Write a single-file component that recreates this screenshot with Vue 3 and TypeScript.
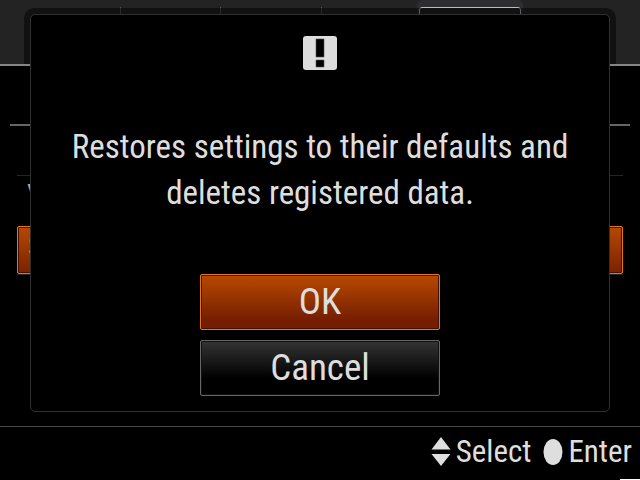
<script setup lang="ts">
import { ref } from 'vue'

type Choice = 'OK' | 'Cancel'

const choices: Choice[] = ['OK', 'Cancel']
const selected = ref<Choice>('OK')
const tabs = [1, 2, 3, 4, 5, 6]
const activeTab = 5
</script>

<template>
  <div class="screen">
    <header class="tabs">
      <span v-for="tab in tabs" :key="tab" class="tab" :class="{ active: tab === activeTab }"></span>
    </header>

    <main class="menu">
      <div class="heading"></div>
      <ul class="list">
        <li class="row">V</li>
        <li class="row current">S</li>
      </ul>
    </main>

    <footer class="guide">
      <span class="hint">
        <svg class="arrows" viewBox="0 0 20 30" aria-hidden="true">
          <path d="M10 0 L19.5 12.5 H0.5 Z M0.5 17 H19.5 L10 29 Z" fill="#dedede" />
        </svg>
        Select
      </span>
      <span class="hint">
        <svg class="dot" viewBox="0 0 20 26" aria-hidden="true">
          <ellipse cx="10" cy="13" rx="9.5" ry="13" fill="#dedede" />
        </svg>
        Enter
      </span>
      <span class="marker"></span>
    </footer>

    <section class="dialog" role="alertdialog" aria-labelledby="message">
      <svg class="alert" viewBox="0 0 34 34" aria-hidden="true">
        <rect width="34" height="34" rx="3" fill="#dedede" />
        <path d="M13 3 H21 V21 H13 Z M13 24 H21 V31 H13 Z" fill="#000" stroke="#555" stroke-width="0.6" />
      </svg>
      <p id="message" class="message">Restores settings to their defaults and<br />deletes registered data.</p>
      <div class="actions">
        <button
          v-for="choice in choices"
          :key="choice"
          type="button"
          class="choice"
          :class="{ selected: choice === selected }"
          @click="selected = choice"
        >
          {{ choice }}
        </button>
      </div>
    </section>
  </div>
</template>

<style>
body {
  margin: 0;
  background: #000;
}
</style>

<style scoped>
.screen {
  position: relative;
  display: flex;
  flex-direction: column;
  box-sizing: border-box;
  min-height: 100vh;
  overflow: hidden;
  background: #000;
  color: #dedede;
  font-family: "Roboto Condensed", "Liberation Sans Narrow", "Arial Narrow", Roboto, sans-serif;
}

.tabs {
  position: relative;
  display: flex;
  box-sizing: border-box;
  height: 66px;
  padding: 7px 20px 0;
  overflow: hidden;
  background: #232323;
  border-bottom: 2px solid #858585;
}

/* shade that the dialog casts on the tab bar */
.tabs::after {
  content: "";
  position: absolute;
  inset: 1px 24px 0;
  border-radius: 10px 10px 0 0;
  background: rgba(0, 0, 0, 0.5);
  top: 8px;
}

.tab {
  flex: 1;
  box-sizing: border-box;
  border-right: 1px solid #555;
}

.tab:nth-child(4),
.tab:nth-child(6) {
  border-right: 0;
}

.tab.active {
  margin-left: -2px;
  border: 1px solid #bbb;
  border-radius: 3px 3px 0 0;
  box-shadow: 0 -5px 0 2px #2d2c2e;
}

.menu {
  flex: 1;
}

.heading {
  height: 58px;
  margin: 0 10px;
  border-bottom: 2px solid #666;
}

.list {
  margin: 49px 17px 0;
  padding: 0;
  list-style: none;
  border-top: 1px solid #252525;
  border-bottom: 1px solid #252525;
}

.row {
  box-sizing: border-box;
  height: 50px;
  padding-left: 10px;
  color: #aaa;
  font-size: 31px;
  line-height: 40px;
}

.row.current {
  height: 48px;
  border: 1px solid #e47b08;
  border-radius: 2px;
  background: linear-gradient(#b54800, #7a2200);
  box-shadow: inset 0 0 0 1px #4a0e00;
}

.guide {
  position: relative;
  display: flex;
  justify-content: flex-end;
  align-items: center;
  gap: 12px;
  box-sizing: border-box;
  height: 54px;
  padding: 0 8px 4px;
  border-top: 1px solid #484848;
  font-size: 31px;
  line-height: 40px;
}

.hint {
  display: flex;
  align-items: center;
  gap: 5px;
}

.arrows {
  width: 20px;
  height: 30px;
}

.dot {
  width: 20px;
  height: 26px;
}

.marker {
  position: absolute;
  right: 0;
  bottom: 0;
  width: 20px;
  height: 1px;
  background: #fff;
}

.dialog {
  position: absolute;
  inset: 14px 30px auto;
  display: flex;
  flex-direction: column;
  align-items: center;
  box-sizing: border-box;
  padding: 21px 12px 15px;
  border: 1px solid #303030;
  border-radius: 5px;
  background: #000;
}

.alert {
  width: 34px;
  height: 34px;
}

.message {
  margin: 54px 0 58px;
  font-size: 33px;
  line-height: 46px;
  text-align: center;
  white-space: nowrap;
}

.actions {
  display: grid;
  gap: 10px;
  width: 240px;
}

.choice {
  box-sizing: border-box;
  height: 56px;
  padding: 0;
  border: 1px solid #666;
  border-radius: 2px;
  background: linear-gradient(#343434, #000 70%);
  color: inherit;
  font-family: inherit;
  font-size: 37px;
  line-height: 46px;
  box-shadow: inset 0 0 0 1px #111;
}

.choice.selected {
  border-color: #e47b08;
  background: linear-gradient(#b84a00, #741d00 85%);
  box-shadow: inset 0 0 0 1px #4a0e00;
}
</style>
